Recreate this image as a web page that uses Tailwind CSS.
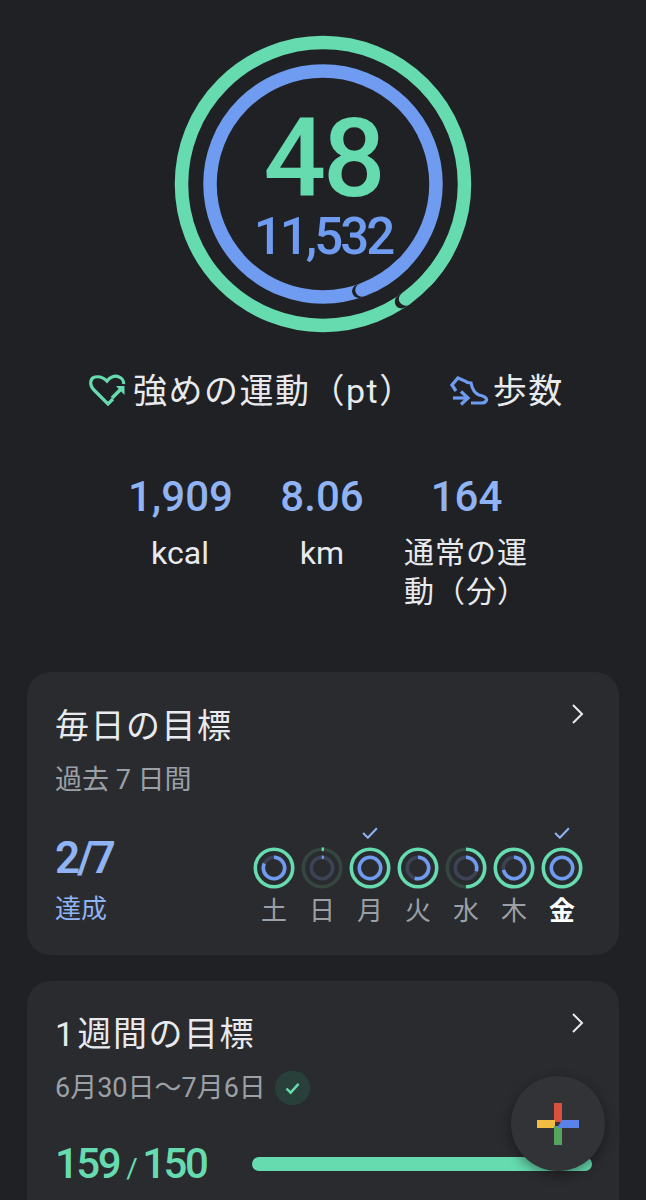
<!DOCTYPE html>
<html lang="ja">
<head>
  <meta charset="UTF-8" />
  <title>Fit</title>
  <script src="https://cdn.jsdelivr.net/npm/@tailwindcss/browser@4"></script>
</head>
<body class="bg-[#202124] overflow-hidden">
  <div class="relative w-[646px] h-[1200px] overflow-hidden text-[#e8eaed] font-['Roboto','Noto_Sans_CJK_JP',sans-serif]">

    <!-- main rings -->
    <div class="relative w-[298px] h-[298px] mx-auto mt-[35px]">
      <svg viewBox="0 0 298 298" class="absolute inset-0 w-full h-full" fill="none" stroke-width="13.5">
        <circle cx="149" cy="149" r="141.5" stroke="#66dbb0" />
        <path d="M227.5 266.7 A141.5 141.5 0 0 0 249.1 249.1" stroke="#202124" stroke-linecap="round" />
        <path d="M231.6 263.9 A141.5 141.5 0 0 0 271.5 219.75" stroke="#66dbb0" stroke-linecap="round" />
        <circle cx="149" cy="149" r="113" stroke="#6f9bf0" />
        <path d="M184.8 256.2 A113 113 0 0 0 205.5 246.9" stroke="#202124" stroke-linecap="round" />
        <path d="M188 255 A113 113 0 0 0 228.9 228.9" stroke="#6f9bf0" stroke-linecap="round" />
      </svg>
      <div class="absolute inset-0 flex flex-col items-center">
        <div class="mt-[84px] h-[80px] text-[110px] leading-[80px] font-medium text-[#66dbb0] tracking-[-3px]">48</div>
        <div class="mt-[13px] h-[50px] text-[51px] leading-[50px] font-medium text-[#6f9bf0] tracking-[-3px]">11,532</div>
      </div>
    </div>

    <!-- ring legend -->
    <div class="flex items-center h-[34px] mt-[41px] pl-[88px] text-[34px] leading-[34px] tracking-[1.5px]">
      <svg viewBox="8 5 39 34" class="w-[39px] h-[34px] shrink-0" fill="none" stroke="#66dbb0" stroke-width="3.2">
        <path d="M33 30 L28 35 L14 21 C9 16 10 9 15 8 C20 7 24 9 27 12 C30 8 35 6 39 8 C42 9 44 12 43.5 15" />
        <path d="M32 29 L41 20" stroke-width="3.6" />
        <path d="M36 17 H44.5 V26 Z" fill="#66dbb0" stroke="none" />
      </svg>
      <span class="ml-[6px] whitespace-nowrap">強めの運動（pt）</span>
      <svg viewBox="9 5 39 34" class="w-[39px] h-[34px] shrink-0 ml-[35px]" fill="none" stroke="#6f9bf0" stroke-width="3.2">
        <path d="M15 22 L11 16 L17 9 L24 12 C26 14 28 14 30 14 C31 19 33 24 38 26 C43 27 46 29 45.5 31 C45 33 43 34 40 34 L30 34" />
        <path d="M12 29 H25" />
        <path d="M20 22.5 L27 29 L20 35.5" />
      </svg>
      <span class="ml-[4px] whitespace-nowrap">歩数</span>
    </div>

    <!-- stats -->
    <div class="flex mt-[64px] pl-[128px] text-[#e8eaed]">
      <div class="w-[104px] text-center">
        <div class="text-[42px] leading-[50px] font-medium text-[#8fb3f3] whitespace-nowrap">1,909</div>
        <div class="mt-[11px] text-[32px] leading-[40px]">kcal</div>
      </div>
      <div class="w-[98px] ml-[41px] text-center">
        <div class="text-[42px] leading-[50px] font-medium text-[#8fb3f3]">8.06</div>
        <div class="mt-[11px] text-[32px] leading-[40px]">km</div>
      </div>
      <div class="w-[125px] ml-[33px]">
        <div class="text-[42px] leading-[50px] font-medium text-[#8fb3f3] text-center">164</div>
        <div class="mt-[11px] text-[30px] leading-[39px] tracking-[1px]">通常の運<br />動（分）</div>
      </div>
    </div>

    <!-- daily goals -->
    <section class="relative mx-[27px] mt-[61px] h-[283px] rounded-[24px] bg-[#2a2b2e] pl-[28px] pt-[32px]">
      <svg viewBox="0 0 14 20" class="absolute right-[34px] top-[32px] w-[14px] h-[20px]" fill="none" stroke="#e8eaed" stroke-width="2"><path d="M2 1 L11 10 L2 19" /></svg>
      <h2 class="text-[34px] leading-[44px] font-normal tracking-[1.5px]">毎日の目標</h2>
      <p class="mt-[15px] text-[27px] leading-[34px] text-[#9aa0a6]">過去 7 日間</p>
      <div class="flex justify-between mt-[30px] pr-[36px]">
        <div class="mt-[6px]">
          <div class="text-[44px] leading-[50px] font-semibold text-[#8fb3f3] tracking-[-3px]">2/7</div>
          <div class="mt-[9px] text-[26px] leading-[34px] text-[#8fb3f3]">達成</div>
        </div>
        <div class="flex gap-[6px]">
          <div class="w-[42px] flex flex-col items-center pt-[20px]">
            <svg viewBox="0 0 42 42" class="w-[42px] h-[42px]" fill="none" stroke-width="3.6">
              <circle cx="21" cy="21" r="18.7" stroke="#66dbb0" />
              <circle cx="21" cy="21" r="10.7" stroke="#3c4354" />
              <circle cx="21" cy="21" r="10.7" stroke="#6f9bf0" pathLength="100" stroke-dasharray="82 100" transform="rotate(-90 21 21)" />
            </svg>
            <span class="mt-[6px] text-[26px] leading-[32px] text-[#9aa0a6]">土</span>
          </div>
          <div class="w-[42px] flex flex-col items-center pt-[20px]">
            <svg viewBox="0 0 42 42" class="w-[42px] h-[42px]" fill="none" stroke-width="3.6">
              <circle cx="21" cy="21" r="18.7" stroke="#35453f" />
              <circle cx="21" cy="21" r="10.7" stroke="#3c4354" />
              <circle cx="21" cy="21" r="18.7" stroke="#66dbb0" pathLength="100" stroke-dasharray="2 100" transform="rotate(-91 21 21)" />
              <circle cx="21" cy="21" r="10.7" stroke="#6f9bf0" pathLength="100" stroke-dasharray="3 100" transform="rotate(-91 21 21)" />
            </svg>
            <span class="mt-[6px] text-[26px] leading-[32px] text-[#9aa0a6]">日</span>
          </div>
          <div class="relative w-[42px] flex flex-col items-center pt-[20px]">
            <svg viewBox="0 0 18 14" class="absolute top-0 left-[13px] w-[16px] h-[12px]" fill="none" stroke="#8fb3f3" stroke-width="2.4"><path d="M1 7 L6.5 12.5 L17 1.5" /></svg>
            <svg viewBox="0 0 42 42" class="w-[42px] h-[42px]" fill="none" stroke-width="3.6">
              <circle cx="21" cy="21" r="18.7" stroke="#66dbb0" />
              <circle cx="21" cy="21" r="10.7" stroke="#6f9bf0" />
            </svg>
            <span class="mt-[6px] text-[26px] leading-[32px] text-[#9aa0a6]">月</span>
          </div>
          <div class="w-[42px] flex flex-col items-center pt-[20px]">
            <svg viewBox="0 0 42 42" class="w-[42px] h-[42px]" fill="none" stroke-width="3.6">
              <circle cx="21" cy="21" r="18.7" stroke="#66dbb0" />
              <circle cx="21" cy="21" r="10.7" stroke="#3c4354" />
              <circle cx="21" cy="21" r="10.7" stroke="#6f9bf0" pathLength="100" stroke-dasharray="55 100" transform="rotate(-90 21 21)" />
            </svg>
            <span class="mt-[6px] text-[26px] leading-[32px] text-[#9aa0a6]">火</span>
          </div>
          <div class="w-[42px] flex flex-col items-center pt-[20px]">
            <svg viewBox="0 0 42 42" class="w-[42px] h-[42px]" fill="none" stroke-width="3.6">
              <circle cx="21" cy="21" r="18.7" stroke="#35453f" />
              <circle cx="21" cy="21" r="10.7" stroke="#3c4354" />
              <circle cx="21" cy="21" r="18.7" stroke="#66dbb0" pathLength="100" stroke-dasharray="50 100" transform="rotate(-90 21 21)" />
              <circle cx="21" cy="21" r="10.7" stroke="#6f9bf0" pathLength="100" stroke-dasharray="30 100" transform="rotate(-90 21 21)" />
            </svg>
            <span class="mt-[6px] text-[26px] leading-[32px] text-[#9aa0a6]">水</span>
          </div>
          <div class="w-[42px] flex flex-col items-center pt-[20px]">
            <svg viewBox="0 0 42 42" class="w-[42px] h-[42px]" fill="none" stroke-width="3.6">
              <circle cx="21" cy="21" r="18.7" stroke="#66dbb0" />
              <circle cx="21" cy="21" r="10.7" stroke="#3c4354" />
              <circle cx="21" cy="21" r="10.7" stroke="#6f9bf0" pathLength="100" stroke-dasharray="72 100" transform="rotate(-90 21 21)" />
            </svg>
            <span class="mt-[6px] text-[26px] leading-[32px] text-[#9aa0a6]">木</span>
          </div>
          <div class="relative w-[42px] flex flex-col items-center pt-[20px]">
            <svg viewBox="0 0 18 14" class="absolute top-0 left-[13px] w-[16px] h-[12px]" fill="none" stroke="#8fb3f3" stroke-width="2.4"><path d="M1 7 L6.5 12.5 L17 1.5" /></svg>
            <svg viewBox="0 0 42 42" class="w-[42px] h-[42px]" fill="none" stroke-width="3.6">
              <circle cx="21" cy="21" r="18.7" stroke="#66dbb0" />
              <circle cx="21" cy="21" r="10.7" stroke="#6f9bf0" />
            </svg>
            <span class="mt-[6px] text-[26px] leading-[32px] font-bold text-white">金</span>
          </div>
        </div>
      </div>
    </section>

    <!-- weekly goal -->
    <section class="relative mx-[27px] mt-[26px] h-[300px] rounded-[24px] bg-[#2a2b2e] pl-[28px] pr-[27px] pt-[31px]">
      <svg viewBox="0 0 14 20" class="absolute right-[34px] top-[32px] w-[14px] h-[20px]" fill="none" stroke="#e8eaed" stroke-width="2"><path d="M2 1 L11 10 L2 19" /></svg>
      <h2 class="text-[34px] leading-[44px] font-normal tracking-[1.5px]">1<span class="ml-[-8px]"> </span>週間の目標</h2>
      <div class="flex items-center mt-[15px] h-[34px]">
        <span class="text-[27px] leading-[34px] text-[#9aa0a6] whitespace-nowrap">6月30日〜7月6日</span>
        <span class="ml-[9px] flex items-center justify-center w-[35px] h-[34px] rounded-full bg-[#29403a]">
          <svg viewBox="0 0 16 14" class="w-[15px] h-[13px]" fill="none" stroke="#66dbb0" stroke-width="2.6"><path d="M1.5 7 L6 11.5 L14.5 2" /></svg>
        </span>
      </div>
      <div class="flex items-center mt-[31px]">
        <div class="w-[197px] shrink-0 text-[#66dbb0] font-medium text-[42px] leading-[56px] whitespace-nowrap tracking-[-2.5px]">159<span class="mx-[7px] text-[28px] font-normal">/</span>150</div>
        <div class="flex-1 h-[14px] mb-[6px] rounded-full bg-[#66dbb0]"></div>
      </div>
    </section>

    <!-- add button -->
    <button class="absolute left-[511px] top-[1076px] w-[94px] h-[95px] rounded-full bg-[#323336] shadow-[0_4px_12px_rgba(0,0,0,0.4)] flex items-center justify-center">
      <svg viewBox="0 0 42 42" class="w-[42px] h-[42px]">
        <rect x="17" y="0" width="8" height="19" fill="#d9503f" />
        <rect x="0" y="17" width="18" height="8" fill="#f0bd42" />
        <rect x="17" y="23" width="8" height="19" fill="#56a55c" />
        <path d="M20 25 L25 17 H42 V25 Z" fill="#5a82e8" />
      </svg>
    </button>
  </div>
</body>
</html>
